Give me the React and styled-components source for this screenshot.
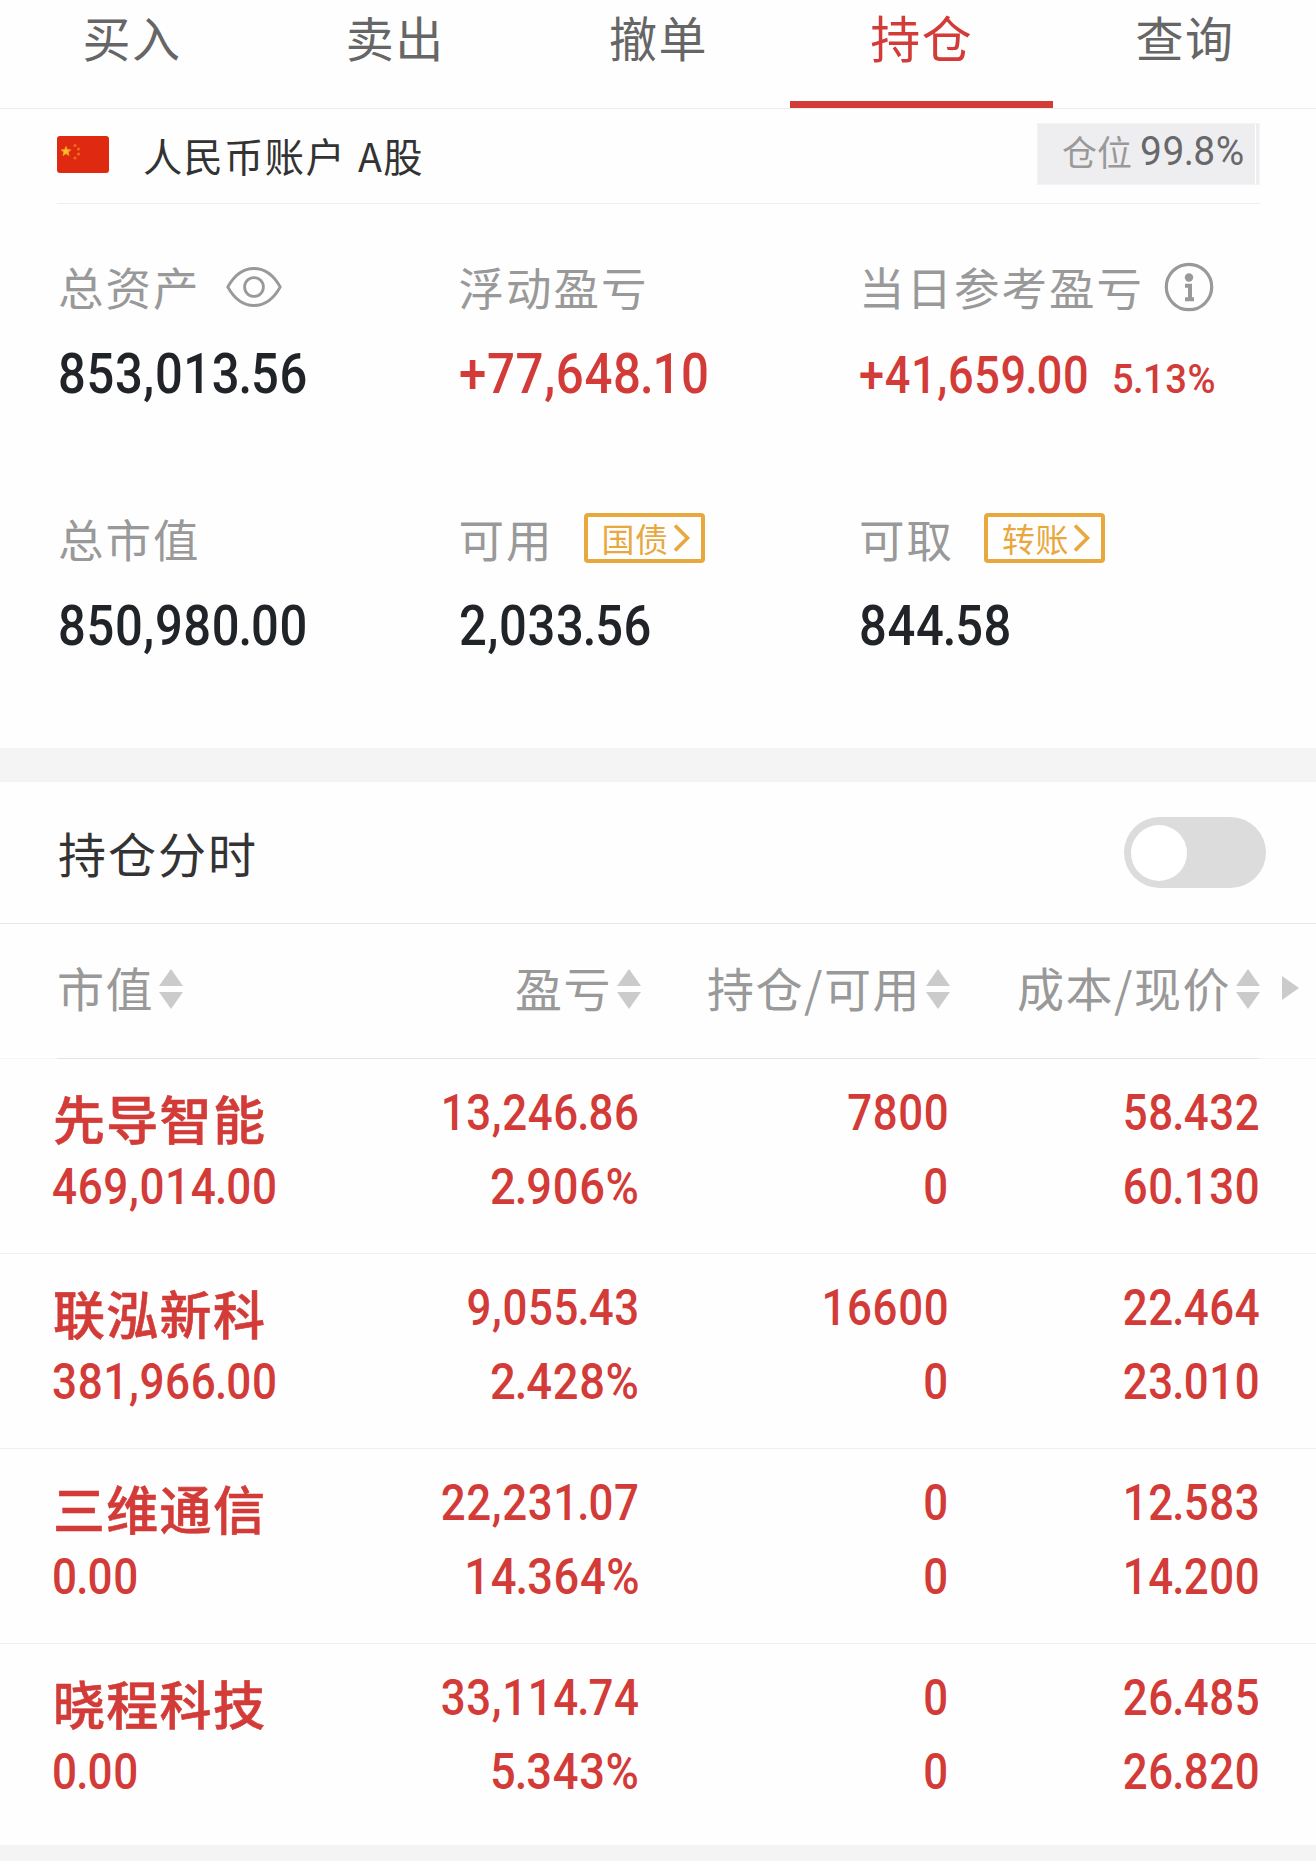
import React, { useState } from 'react';
import styled, { createGlobalStyle } from 'styled-components';

const GlobalStyle = createGlobalStyle`
  * {
    box-sizing: border-box;
  }
  body {
    margin: 0;
    background: #fefefe;
    font-family: 'Noto Sans CJK SC', sans-serif;
    color: #333;
  }
`;

const RED = '#d23b37';
const DARK = '#202429';

const Page = styled.div`
  width: 1316px;
  height: 1861px;
  overflow: hidden;
  background: #fefefe;
`;

/* ---------- Tabs ---------- */
const Tabs = styled.nav`
  display: flex;
  height: 109px;
  border-bottom: 1px solid #ebebeb;
`;

const Tab = styled.div`
  flex: 1;
  height: 108px;
  padding: 1px 0 0 1px;
  text-align: center;
  line-height: 71px;
  letter-spacing: 1.5px;
  font-size: ${(p) => (p.$active ? 50 : 48)}px;
  color: ${(p) => (p.$active ? RED : '#666')};
  border-bottom: 7px solid ${(p) => (p.$active ? RED : 'transparent')};
`;

/* ---------- Account line ---------- */
const Account = styled.div`
  display: flex;
  align-items: flex-start;
  height: 95px;
  margin: 0 56px 0 57px;
  border-bottom: 1px solid #efefef;
`;

const Flag = styled.svg`
  margin-top: 27px;
  width: 52px;
  height: 37px;
`;

const AccountName = styled.div`
  margin: 16px auto 0 34px;
  font-size: 39.3px;
  line-height: 60px;
  letter-spacing: 1.3px;
  word-spacing: 2px;
`;

const Position = styled.div`
  display: flex;
  align-items: center;
  width: 223px;
  height: 62px;
  margin-top: 14px;
  padding: 0 0 6px 24px;
  background: #eeeef0;
  border: 1px solid #f3f3f4;
  box-shadow: inset -3px 0 0 #eeeef0, inset -4px 0 0 #fff;
`;

const PositionLabel = styled.span`
  font-size: 35px;
  line-height: 54px;
  color: #999;
`;

/* DIN like numbers: Roboto, slightly condensed */
const NumText = styled.span`
  display: inline-block;
  font-family: Roboto, sans-serif;
  font-weight: ${(p) => p.$weight || 500};
  font-size: ${(p) => p.$size}px;
  color: ${(p) => p.$color || RED};
  letter-spacing: 0.7px;
  white-space: nowrap;
  transform: scaleX(${(p) => p.$stretch});
  transform-origin: ${(p) => p.$origin || 'left'} center;
`;

const Dot = styled.span`
  margin: 0 -0.035em;
`;

/* ---------- Assets ---------- */
const Assets = styled.section`
  display: grid;
  grid-template-columns: 400.5px 400.5px 1fr;
  grid-auto-rows: 252px;
  height: 544px;
  padding: 48px 0 0 58px;
`;

const AssetLabel = styled.div`
  display: flex;
  align-items: center;
  height: 70px;
  font-size: 45.5px;
  line-height: 68px;
  letter-spacing: 2px;
  color: #999;
  white-space: nowrap;
`;

const LabelText = styled.span`
  height: 70px;
`;

const AssetValue = styled.div`
  display: flex;
  align-items: baseline;
  margin-top: ${(p) => (p.$small ? 19 : 17)}px;
  line-height: 70px;
`;

const Percent = styled.span`
  margin-left: -7px;
`;

const EyeIcon = styled.svg`
  width: 56px;
  height: 42px;
  margin: 0 0 0 25px;
`;

const InfoIcon = styled.svg`
  width: 50px;
  height: 50px;
  margin: 0 0 0 20px;
`;

const LinkButton = styled.div`
  display: flex;
  align-items: center;
  width: 121px;
  height: 50px;
  margin: -3px 0 0 30px;
  padding-left: 14px;
  border: 4px solid #e8a83e;
  border-radius: 4px;
  color: #e8a83e;
  font-size: 33px;
  line-height: 42px;
  letter-spacing: 0.5px;
`;

const Chevron = styled.svg`
  width: 18px;
  height: 28px;
  margin-left: 4px;
`;

const Gap = styled.div`
  height: 34px;
  background: #f4f4f4;
`;

/* ---------- Intraday switch ---------- */
const SwitchRow = styled.div`
  display: flex;
  align-items: center;
  justify-content: space-between;
  height: 142px;
  padding: 0 50px 0 58px;
  border-bottom: 1px solid #e8e8e8;
  font-size: 48px;
  letter-spacing: 2px;
  color: #333;
`;

const SwitchTitle = styled.span`
  padding-bottom: 2px;
`;

const Switch = styled.button`
  width: 142px;
  height: 71px;
  padding: 7px;
  border: 0;
  border-radius: 36px;
  background: #dcdcdc;
`;

const Knob = styled.span`
  display: block;
  width: 56px;
  height: 56px;
  border-radius: 50%;
  background: #fff;
  transform: translateX(${(p) => (p.$on ? 72 : 0)}px);
`;

/* ---------- Table ---------- */
const columns = `
  display: grid;
  grid-template-columns: 284px 300px 309px 310px 1fr;
  padding-left: 57px;
`;

const HeadRow = styled.div`
  ${columns}
  align-items: center;
  height: 134px;
`;

const HeadCell = styled.div`
  display: flex;
  align-items: center;
  justify-content: ${(p) => (p.$left ? 'flex-start' : 'flex-end')};
  height: 134px;
  padding-bottom: 9px;
  font-size: 47px;
  letter-spacing: 1.5px;
  color: #999;
  white-space: nowrap;
`;

const SortIcon = styled.svg`
  width: 24px;
  height: 40px;
  margin: 4px 0 0 5px;
`;

const MoreIcon = styled.svg`
  width: 17px;
  height: 24px;
  margin: -6px 0 0 22px;
`;

const HeadLine = styled.div`
  height: 1px;
  background: linear-gradient(90deg, #f5f5f5 57px, #e4e4e4 57px, #e4e4e4 1259px, #f5f5f5 1259px);
`;

const Row = styled.div`
  ${columns}
  height: 195px;
  padding-top: 17px;
  border-bottom: 1px solid #f0f0f0;

  &:nth-last-child(2) {
    height: 201px;
    border-bottom: 0;
  }
`;

const Cell = styled.div`
  display: flex;
  flex-direction: column;
  align-items: flex-end;
  padding-right: ${(p) => p.$inset || 0}px;
  line-height: 74px;
`;

const NameCell = styled(Cell)`
  align-items: flex-start;
  margin-left: -5px;
`;

const StockName = styled.div`
  height: 74px;
  padding: 5px 0 0 1px;
  font-size: 52px;
  font-weight: 500;
  letter-spacing: 1.3px;
  color: ${RED};
  -webkit-text-stroke: 0.6px ${RED};
`;

const Footer = styled.div`
  height: 17px;
  background: #f4f4f4;
`;

const tabs = ['买入', '卖出', '撤单', '持仓', '查询'];

const heads = ['市值', '盈亏', '持仓/可用', '成本/现价'];

const stocks = [
  { name: '先导智能', value: '469,014.00', profit: '13,246.86', rate: '2.906%', held: '7800', usable: '0', cost: '58.432', price: '60.130' },
  { name: '联泓新科', value: '381,966.00', profit: '9,055.43', rate: '2.428%', held: '16600', usable: '0', cost: '22.464', price: '23.010' },
  { name: '三维通信', value: '0.00', profit: '22,231.07', rate: '14.364%', held: '0', usable: '0', cost: '12.583', price: '14.200' },
  { name: '晓程科技', value: '0.00', profit: '33,114.74', rate: '5.343%', held: '0', usable: '0', cost: '26.485', price: '26.820' },
];

const Num = ({ children, size, weight, color, origin, stretch }) => {
  const [whole, decimals] = children.split('.');
  return (
    <NumText
      $size={size}
      $weight={weight}
      $color={color}
      $origin={origin}
      $stretch={stretch || (children.endsWith('%') ? 0.915 : 0.885)}
    >
      {whole}{decimals && <Dot>.</Dot>}{decimals}
    </NumText>
  );
};

const Asset = ({ label, extra, small, children }) => (
  <div>
    <AssetLabel><LabelText>{label}</LabelText>{extra}</AssetLabel>
    <AssetValue $small={small}>{children}</AssetValue>
  </div>
);

const ActionLink = ({ children }) => (
  <LinkButton>
    {children}
    <Chevron viewBox="0 0 18 28" fill="none" stroke="#e8a83e" strokeWidth="3.6">
      <path d="M2 1.5 L14.5 14 L2 26.5" />
    </Chevron>
  </LinkButton>
);

const Sort = () => (
  <SortIcon viewBox="0 0 24 40" fill="#cbcbcb">
    <path d="M12 0 L24 17 H0 Z" />
    <path d="M0 23 H24 L12 40 Z" />
  </SortIcon>
);

const Pair = ({ top, bottom, inset }) => (
  <Cell $inset={inset}>
    <Num size={49.5} origin="right">{top}</Num>
    <Num size={49.5} origin="right">{bottom}</Num>
  </Cell>
);

const App = () => {
  const [intraday, setIntraday] = useState(false);

  return (
    <Page>
      <GlobalStyle />
      <Tabs>
        {tabs.map((tab) => (
          <Tab key={tab} $active={tab === '持仓'}>{tab}</Tab>
        ))}
      </Tabs>

      <Account>
        <Flag viewBox="0 0 52 37">
          <rect width="52" height="37" rx="3" fill="#df2911" />
          <path d="M9 10.5 L10.3 13.7 L13.8 13.9 L11.1 16.1 L12 19.5 L9 17.6 L6 19.5 L6.9 16.1 L4.2 13.9 L7.7 13.7 Z" fill="#fbc02a" stroke="#f59a1f" />
          <g fill="#ee6a1c">
            <circle cx="18" cy="9.5" r="1.6" />
            <circle cx="21.5" cy="13" r="1.6" />
            <circle cx="21.5" cy="18" r="1.6" />
            <circle cx="18" cy="22" r="1.6" />
          </g>
        </Flag>
        <AccountName>人民币账户 A股</AccountName>
        <Position>
          <PositionLabel>仓位&nbsp;</PositionLabel>
          <Num size={40.5} weight={400} color="#68686b" stretch={0.96}>99.8%</Num>
        </Position>
      </Account>

      <Assets>
        <Asset
          label="总资产"
          extra={(
            <EyeIcon viewBox="0 0 56 42" fill="none" stroke="#999" strokeWidth="2.8">
              <path d="M1.8 21 C9 8 18 2.5 28 2.5 C38 2.5 47 8 54.2 21 C47 34 38 39.5 28 39.5 C18 39.5 9 34 1.8 21 Z" />
              <circle cx="28" cy="21" r="9.4" />
            </EyeIcon>
          )}
        >
          <Num size={55} color={DARK} stretch={0.89}>853,013.56</Num>
        </Asset>
        <Asset label="浮动盈亏">
          <Num size={55} stretch={0.895}>+77,648.10</Num>
        </Asset>
        <Asset
          small
          label="当日参考盈亏"
          extra={(
            <InfoIcon viewBox="0 0 50 50" fill="none" stroke="#999">
              <circle cx="25" cy="25" r="22.7" strokeWidth="3.2" />
              <circle cx="25" cy="15.5" r="4.2" fill="#999" stroke="none" />
              <path d="M21 23.8 H26 V37 M21 37.3 H30" strokeWidth="4" />
            </InfoIcon>
          )}
        >
          <Num size={51} stretch={0.885}>+41,659.00</Num>
          <Percent><Num size={41} stretch={0.93}>5.13%</Num></Percent>
        </Asset>
        <Asset label="总市值">
          <Num size={55} color={DARK} stretch={0.89}>850,980.00</Num>
        </Asset>
        <Asset label="可用" extra={<ActionLink>国债</ActionLink>}>
          <Num size={55} color={DARK} stretch={0.89}>2,033.56</Num>
        </Asset>
        <Asset label="可取" extra={<ActionLink>转账</ActionLink>}>
          <Num size={55} color={DARK} stretch={0.89}>844.58</Num>
        </Asset>
      </Assets>

      <Gap />

      <SwitchRow>
        <SwitchTitle>持仓分时</SwitchTitle>
        <Switch onClick={() => setIntraday(!intraday)}>
          <Knob $on={intraday} />
        </Switch>
      </SwitchRow>

      <HeadRow>
        {heads.map((head, i) => (
          <HeadCell key={head} $left={i === 0}>{head}<Sort /></HeadCell>
        ))}
        <MoreIcon viewBox="0 0 17 24" fill="#cbcbcb">
          <path d="M0 0 L17 12 L0 24 Z" />
        </MoreIcon>
      </HeadRow>
      <HeadLine />

      {stocks.map((stock) => (
        <Row key={stock.name}>
          <NameCell>
            <StockName>{stock.name}</StockName>
            <Num size={49.5} stretch={0.89}>{stock.value}</Num>
          </NameCell>
          <Pair top={stock.profit} bottom={stock.rate} inset={1} />
          <Pair top={stock.held} bottom={stock.usable} inset={1} />
          <Pair top={stock.cost} bottom={stock.price} />
        </Row>
      ))}
      <Footer />
    </Page>
  );
};

export default App;
